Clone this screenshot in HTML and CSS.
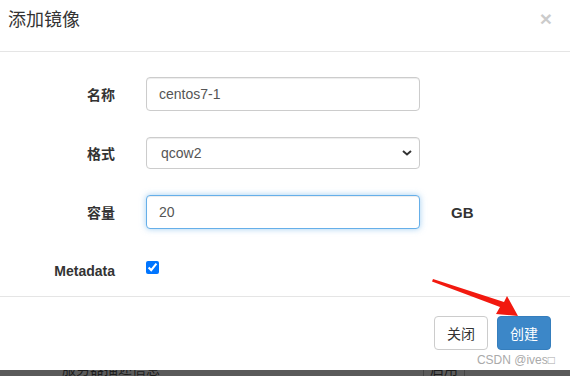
FILE: index.html
```html
<!DOCTYPE html>
<html lang="zh">

<head>
    <meta charset="UTF-8">
    <meta name="viewport" content="width=device-width, initial-scale=1.0">
    <title>添加镜像</title>

    <link rel="stylesheet" href="styles.css">
</head>

<body>

    <div class="modal">
        <div class="modal-header">
            <h4 class="modal-title">添加镜像</h4>
            <span class="close">&times;</span>
        </div>

        <form class="modal-body">
            <label class="form-label" for="name">名称</label>
            <input class="form-control" type="text" id="name" value="centos7-1">
            <span></span>

            <label class="form-label" for="format">格式</label>
            <select class="form-control form-select" id="format">
                <option>qcow2</option>
                <option>raw</option>
            </select>
            <span></span>

            <label class="form-label" for="size">容量</label>
            <input class="form-control focused" type="text" id="size" value="20">
            <span class="unit">GB</span>

            <label class="form-label" for="meta">Metadata</label>
            <div class="check-cell"><input type="checkbox" id="meta" checked></div>
            <span></span>
        </form>

        <div class="modal-footer">
            <button class="btn btn-default" type="button">关闭</button>
            <button class="btn btn-primary" type="button">创建</button>
        </div>

        <div class="watermark">CSDN @ives&#x25A1;</div>

        <!-- annotation arrow drawn over the footer -->
        <svg class="arrow" width="100" height="50" viewBox="0 0 100 50">
            <polygon points="8,7 79,30 82,24 93,44 71,42 75,35 7,9.5" fill="#f2190f"/>
        </svg>
    </div>

    <div class="backdrop-row">
        <span class="row-name">服务器描述信息</span>
        <span class="row-state">启用</span>
    </div>

</body>

</html>
```

FILE: styles.css
```css
body {
    font-family: "Liberation Sans", "Noto Sans CJK SC", sans-serif;
    font-size: 14px;
    color: #333;
    margin: 0;
    width: 570px;
    height: 376px;
    overflow: hidden;
    background-color: #5a5a5a;
}

.modal {
    position: relative;
    background-color: #fff;
    height: 370px;
}

.modal-header {
    display: flex;
    justify-content: space-between;
    align-items: flex-start;
    height: 52px;
    box-sizing: border-box;
    padding: 10px 18px 0 8px;
    border-bottom: 1px solid #e5e5e5;
}

.modal-title {
    margin: 0;
    font-size: 18px;
    font-weight: normal;
    line-height: 20px;
    color: #333;
}

.close {
    font-size: 21px;
    font-weight: bold;
    line-height: 18px;
    color: #000;
    opacity: 0.2;
}

.modal-body {
    display: grid;
    grid-template-columns: 115px 274px 80px;
    grid-auto-rows: 34px;
    column-gap: 31px;
    row-gap: 25px;
    padding: 25px 0 8px 0;
    height: 244px;
    box-sizing: border-box;
    margin: 0;
}

.form-label {
    justify-self: end;
    align-self: center;
    font-weight: bold;
    font-size: 14px;
}

.form-label[for="meta"] {
    margin-top: 0;
}

.form-control {
    width: 274px;
    height: 34px;
    padding: 6px 12px;
    box-sizing: border-box;
    border: 1px solid #ccc;
    border-radius: 4px;
    font-family: "Liberation Sans", "Noto Sans CJK SC", sans-serif;
    font-size: 14px;
    color: #555;
    background-color: #fff;
    box-shadow: inset 0 1px 1px rgba(0, 0, 0, .075);
    outline: none;
}

.form-select {
    height: 32px;
    margin-top: 1px;
    padding-left: 14px;
    appearance: none;
    background-image: url("data:image/svg+xml,%3Csvg xmlns='http://www.w3.org/2000/svg' width='10' height='6' viewBox='0 0 10 6'%3E%3Cpath d='M1 1l4 3.5L9 1' fill='none' stroke='%23333' stroke-width='2'/%3E%3C/svg%3E");
    background-repeat: no-repeat;
    background-position: right 7px center;
}

.focused {
    border-color: #66afe9;
    box-shadow: inset 0 1px 1px rgba(0, 0, 0, .075), 0 0 6px rgba(102, 175, 233, .6);
}

.unit {
    align-self: center;
    font-weight: bold;
    font-size: 15px;
}

.check-cell {
    padding-top: 7px;
}

.check-cell input {
    margin: 0;
    width: 13px;
    height: 13px;
    accent-color: #0075ff;
}

.modal-footer {
    display: flex;
    justify-content: flex-end;
    gap: 9px;
    padding: 19px 19px 0 0;
    border-top: 1px solid #e5e5e5;
}

.btn {
    height: 34px;
    padding: 6px 12px;
    font-family: "Liberation Sans", "Noto Sans CJK SC", sans-serif;
    font-size: 14px;
    border-radius: 4px;
    border: 1px solid transparent;
    cursor: pointer;
}

.btn-default {
    width: 54px;
    color: #333;
    background-color: #fff;
    border-color: #ccc;
}

.btn-primary {
    width: 54px;
    color: #fff;
    background-color: #3c87c8;
    border-color: #357ebd;
}

.watermark {
    position: absolute;
    right: 15px;
    bottom: 3px;
    font-size: 12px;
    color: #aaa;
}

.arrow {
    position: absolute;
    left: 425px;
    top: 272px;
}

.backdrop-row {
    display: flex;
    height: 6px;
    overflow: hidden;
    font-size: 14px;
    line-height: 14px;
    color: #1c1c1c;
}

.row-name {
    margin: -8px 0 0 62px;
}

.row-state {
    margin: -8px 0 0 263px;
    padding: 0 6px;
    border-left: 1px solid #444;
    border-right: 1px solid #444;
}
```
